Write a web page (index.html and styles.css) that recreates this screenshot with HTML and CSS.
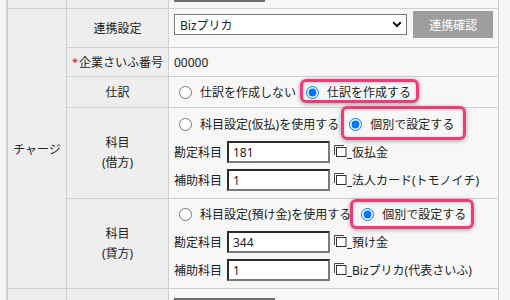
FILE: index.html
```html
<!DOCTYPE html>
<html lang="ja">
<head>
<meta charset="utf-8">
<title>チャージ設定</title>
<link rel="stylesheet" href="styles.css">
</head>
<body>
<div class="form">
  <div class="cell c1 lead"></div>
  <div class="cell c2 lead"></div>
  <div class="cell c3 lead"><div class="stub stub-top"></div></div>

  <div class="cell c1 charge">チャージ</div>

  <div class="cell c2">連携設定</div>
  <div class="cell c3 link-row">
    <div class="select"><span>Bizプリカ</span>
      <svg class="chev" width="10" height="7" viewBox="0 0 10 7"><path d="M1.2 1.2 L5 5 L8.8 1.2" fill="none" stroke="#111" stroke-width="2"/></svg>
    </div>
    <button class="btn" type="button">連携確認</button>
  </div>

  <div class="cell c2"><span class="req">*</span>企業さいふ番号</div>
  <div class="cell c3 plain">00000</div>

  <div class="cell c2">仕訳</div>
  <div class="cell c3 journal">
    <div class="line">
      <label class="opt"><input type="radio" name="journal">仕訳を作成しない</label>
      <label class="opt hl hl-a"><input type="radio" name="journal" checked>仕訳を作成する</label>
    </div>
  </div>

  <div class="cell c2 two">科目<br>(借方)</div>
  <div class="cell c3 block debit">
    <div class="line">
      <label class="opt"><input type="radio" name="debit">科目設定(仮払)を使用する</label>
      <label class="opt hl hl-b"><input type="radio" name="debit" checked>個別で設定する</label>
    </div>
    <div class="line">
      <span class="flabel">勘定科目</span><span class="field">181</span>
      <svg class="pick" width="14" height="14" viewBox="0 0 14 14"><path d="M1.5 11 V1.5 H11" fill="none" stroke="#444" stroke-width="1"/><rect x="3.5" y="3.5" width="9.5" height="9" fill="#fff" stroke="#333" stroke-width="1"/></svg><span class="us"></span><span class="fname">仮払金</span>
    </div>
    <div class="line">
      <span class="flabel">補助科目</span><span class="field">1</span>
      <svg class="pick" width="14" height="14" viewBox="0 0 14 14"><path d="M1.5 11 V1.5 H11" fill="none" stroke="#444" stroke-width="1"/><rect x="3.5" y="3.5" width="9.5" height="9" fill="#fff" stroke="#333" stroke-width="1"/></svg><span class="us"></span><span class="fname">法人カード(トモノイチ)</span>
    </div>
  </div>

  <div class="cell c2 two">科目<br>(貸方)</div>
  <div class="cell c3 block credit">
    <div class="line">
      <label class="opt"><input type="radio" name="credit">科目設定(預け金)を使用する</label>
      <label class="opt hl hl-c"><input type="radio" name="credit" checked>個別で設定する</label>
    </div>
    <div class="line">
      <span class="flabel">勘定科目</span><span class="field">344</span>
      <svg class="pick" width="14" height="14" viewBox="0 0 14 14"><path d="M1.5 11 V1.5 H11" fill="none" stroke="#444" stroke-width="1"/><rect x="3.5" y="3.5" width="9.5" height="9" fill="#fff" stroke="#333" stroke-width="1"/></svg><span class="us"></span><span class="fname">預け金</span>
    </div>
    <div class="line">
      <span class="flabel">補助科目</span><span class="field">1</span>
      <svg class="pick" width="14" height="14" viewBox="0 0 14 14"><path d="M1.5 11 V1.5 H11" fill="none" stroke="#444" stroke-width="1"/><rect x="3.5" y="3.5" width="9.5" height="9" fill="#fff" stroke="#333" stroke-width="1"/></svg><span class="us"></span><span class="fname">Bizプリカ(代表さいふ)</span>
    </div>
  </div>

  <div class="cell c1"></div>
  <div class="cell c2"></div>
  <div class="cell c3 tail"><div class="stub stub-bottom"></div></div>
</div>
</body>
</html>
```

FILE: styles.css
```css
html, body {
  margin: 0;
  padding: 0;
  background: #f5f5f5;
  overflow: hidden;
}

body {
  font-family: "Noto Sans", "Noto Sans CJK JP", sans-serif;
  font-size: 12px;
  color: #222;
}

.form {
  display: grid;
  grid-template-columns: 58px 101px 329px;
  grid-template-rows: 30px 38px 28px 30px 90px 89px 11px;
  gap: 1px;
  background: #cfcfcf;
  width: max-content;
  margin: -22px 0 0 6px;
  border-left: 2px solid #cfcfcf;
  border-right: 1px solid #cfcfcf;
}

.cell {
  background: #eeeeee;
  display: flex;
  align-items: center;
  min-width: 0;
}

.c1 { grid-column: 1; justify-content: center; }
.c2 { grid-column: 2; justify-content: center; text-align: center; }
.c3 { grid-column: 3; background: #f7f7f7; padding: 0 5px; }

.charge {
  grid-row: 2 / span 5;
}

.two {
  line-height: 20px;
}

.req {
  color: #e60012;
  font-size: 11px;
  margin-right: 1px;
  position: relative;
  top: -1px;
}

/* partial fields of neighbouring rows */
.lead.c3 { align-items: flex-end; }
.stub {
  background: #fff;
  border: 2px solid #6f6f6f;
  box-sizing: border-box;
  height: 22px;
  flex: none;
}
.stub-top { width: 91px; margin-bottom: 6px; }
.tail { align-items: flex-start; overflow: hidden; }
.stub-bottom { width: 101px; margin-top: 9px; }

/* link row */
.link-row {
  align-items: flex-start;
  padding-top: 2px;
}
.select {
  width: 234px;
  height: 21px;
  box-sizing: border-box;
  border: 1px solid #767676;
  background: #fff;
  display: flex;
  align-items: center;
  justify-content: space-between;
  padding: 0 4px 0 5px;
  margin-top: 3px;
}
.chev { display: block; }
.btn {
  margin-left: 6px;
  width: 80px;
  height: 27px;
  border: none;
  background: #9e9e9e;
  color: #fff;
  font-family: inherit;
  font-size: 12px;
  padding: 0;
}

/* radio groups */
.journal { align-items: center; }
.block {
  flex-direction: column;
  align-items: stretch;
  justify-content: flex-start;
}
.debit { padding-top: 2px; }
.credit { padding-top: 1px; }

.line {
  display: flex;
  align-items: center;
  height: 28px;
}
.journal .line { height: auto; }

.opt {
  display: inline-flex;
  align-items: center;
  line-height: 17px;
  margin-left: 10px;
  position: relative;
  white-space: nowrap;
}
.opt:first-child { margin-left: 5px; }
.opt input {
  width: 13px;
  height: 13px;
  margin: 0 8px 0 0;
}

.hl::before {
  content: "";
  position: absolute;
  border: 3px solid #f03a7b;
  border-radius: 6px;
  box-shadow: 0 1px 4px rgba(0, 0, 0, 0.35), inset 0 1px 3px rgba(0, 0, 0, 0.2);
  pointer-events: none;
}
.hl-a::before { top: -5px; bottom: -2px; left: -6px; right: -8px; }
.hl-b::before { top: -10px; bottom: -7px; left: -8px; right: -12px; }
.hl-c::before { top: -7px; bottom: -6px; left: -11px; right: -8px; }

/* account fields */
.flabel {
  width: 48px;
  margin-right: 5px;
  white-space: nowrap;
}
.field {
  width: 103px;
  height: 22px;
  box-sizing: border-box;
  background: #fff;
  border-style: solid;
  border-width: 2px;
  border-color: #2a2a2a #7a7a7a #7a7a7a #2a2a2a;
  padding: 0 4px;
  display: flex;
  align-items: center;
  color: #222;
}
.pick {
  margin-left: 3px;
  align-self: center;
  margin-top: -3px;
}
.us {
  width: 5px;
  align-self: center;
  height: 1px;
  background: #333;
  margin-top: 12px;
}
.fname {
  white-space: nowrap;
}
```
